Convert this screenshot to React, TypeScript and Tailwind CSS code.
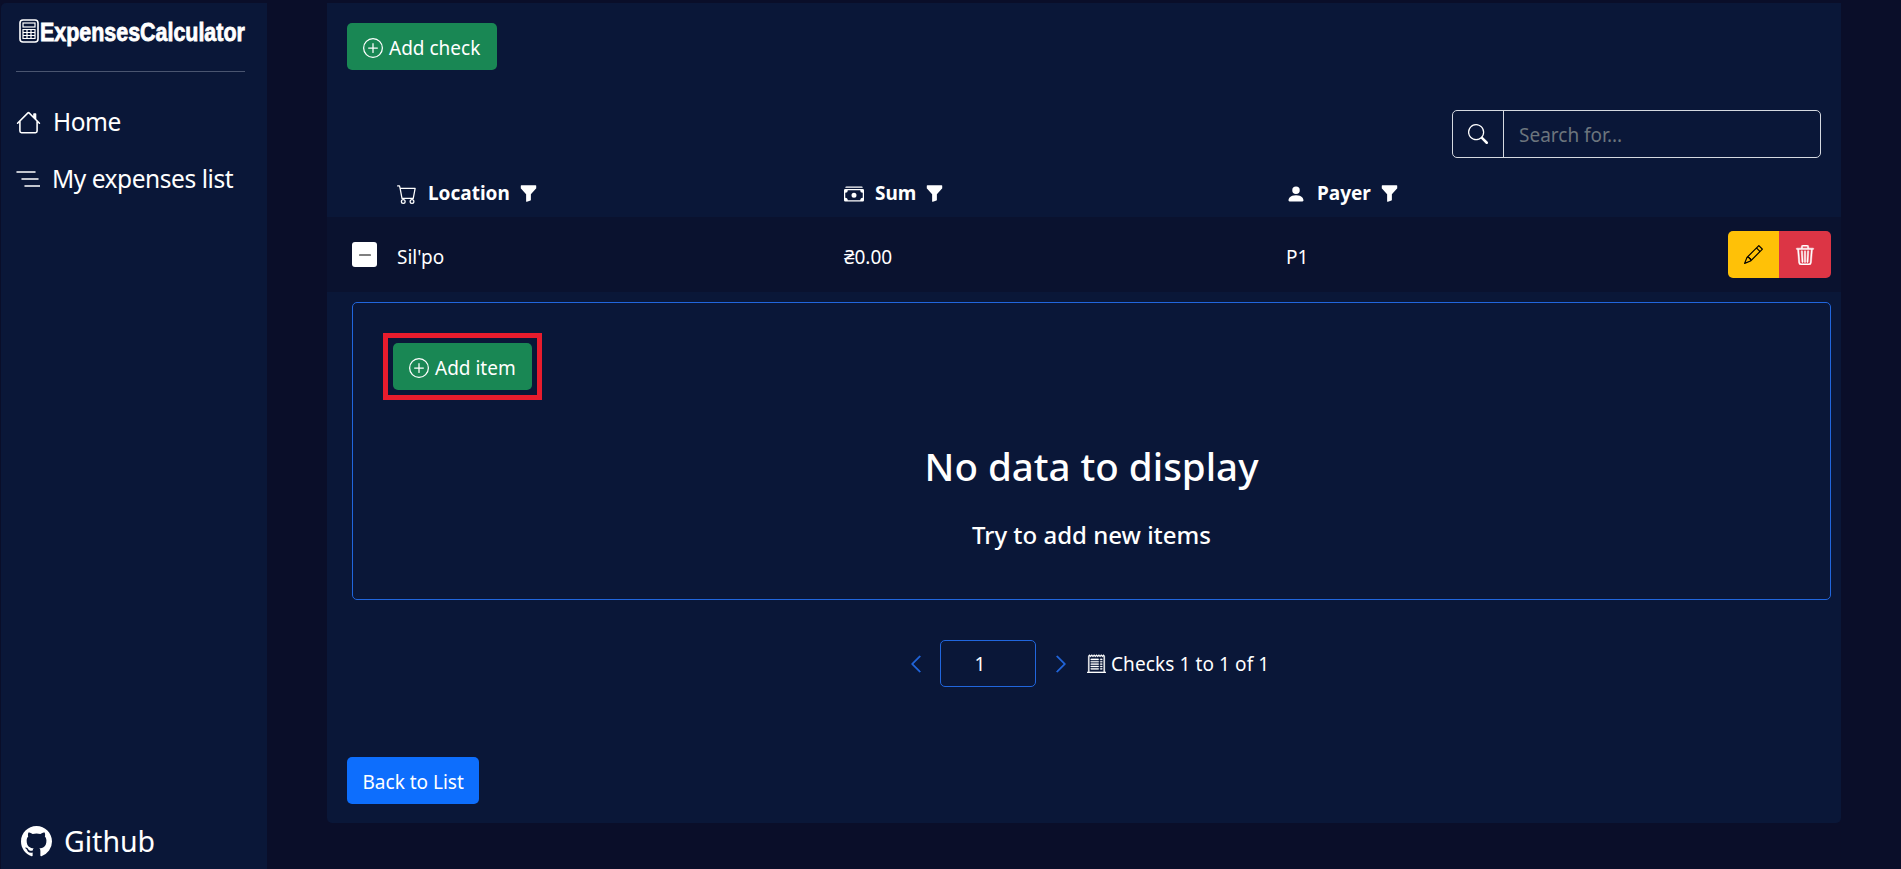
import { BsCart, BsCashStack, BsChevronLeft, BsChevronRight, BsDashLg, BsFunnelFill, BsGithub, BsHouse, BsPencil, BsPersonFill, BsPlusCircle, BsReceiptCutoff, BsSearch, BsTrash3 } from "react-icons/bs";

function ListIcon() {
  return (
    <svg viewBox="0 0 24 16" className="h-[16px] w-[24px]" fill="none" stroke="white" strokeWidth="1.5" strokeLinecap="round">
      <path d="M1 1h18M6 8h16M9 15h15" />
    </svg>
  );
}

function CalculatorIcon() {
  return (
    <svg viewBox="0 0 20 24" className="ml-[3px] h-[24px] w-[20px] shrink-0" fill="none" stroke="white">
      <rect x="1" y="1" width="18" height="22" rx="3" strokeWidth="1.6" />
      <rect x="4" y="4" width="12" height="4" strokeWidth="1.2" />
      <path d="M4 10.5h12v9H4zM4 13.5h12M4 16.5h12M8 10.5v9M12 10.5v9" strokeWidth="1.2" />
    </svg>
  );
}

function ColumnTitle({ icon, label, className }: { icon: React.ReactNode; label: string; className: string }) {
  return (
    <div className={`flex items-center font-bold ${className}`}>
      {icon}
      <span className="ml-[11px]">{label}</span>
      <BsFunnelFill className="ml-[9px] h-[19px] w-[19px]" />
    </div>
  );
}

function GreenButton({ label, className }: { label: string; className: string }) {
  return (
    <button className={`flex h-[47px] items-center gap-[6px] rounded-[5px] bg-[#198754] pt-[3px] pl-[16px] text-white ${className}`}>
      <BsPlusCircle className="h-[20px] w-[20px]" />
      {label}
    </button>
  );
}

export default function App() {
  return (
    <div className="flex h-[869px] w-[1901px] overflow-hidden bg-[#0a0e29] pt-[3px] text-[19px] text-white [font-family:'Noto_Sans',sans-serif]">
      <aside className="ml-[1px] flex w-[266px] flex-col rounded-tl-[5px] bg-[#0a1738] pb-[6px] pl-[15px] pr-[22px]">
        <div className="flex h-[69px] items-start border-b border-[#4a5570] pt-[16px]">
          <CalculatorIcon />
          <span className="ml-[1px] origin-left scale-x-[0.857] text-[25px] leading-[27px] font-bold whitespace-nowrap [-webkit-text-stroke:0.8px_white] [font-family:'Liberation_Sans',sans-serif]">
            ExpensesCalculator
          </span>
        </div>
        <nav className="mt-[30px] flex flex-col gap-[17px] text-[24.5px] leading-[40px] tracking-[-0.45px]">
          <a className="flex items-center gap-[12px]">
            <BsHouse className="h-[25px] w-[25px]" />
            Home
          </a>
          <a className="flex items-center gap-[12px]">
            <ListIcon />
            My expenses list
          </a>
        </nav>
        <a className="mt-auto ml-[5px] flex items-center gap-[12px] text-[28.5px]">
          <BsGithub className="h-[31px] w-[31px]" />
          Github
        </a>
      </aside>

      <main className="pl-[60px]">
        <div className="flex h-[820px] w-[1514px] flex-col rounded-b-[5px] bg-[#0a1738]">
          <div className="pt-[20px] pl-[20px]">
            <GreenButton label="Add check" className="pr-[17px]" />
          </div>

          <div className="mt-[40px] flex justify-end pr-[20px]">
            <div className="flex h-[48px] w-[369px] rounded-[5px] border border-[#d5d9e0]">
              <div className="flex w-[51px] items-center justify-center border-r border-[#d5d9e0]">
                <BsSearch className="h-[20px] w-[20px]" />
              </div>
              <input placeholder="Search for..." className="min-w-0 flex-1 bg-transparent px-[15px] pt-[2px] outline-none placeholder:text-[#6c757d]" />
            </div>
          </div>

          <div className="flex h-[59px] items-center pt-[12px] pl-[70px]">
            <ColumnTitle className="w-[447px]" icon={<BsCart className="h-[20px] w-[20px]" />} label="Location" />
            <ColumnTitle className="w-[442px]" icon={<BsCashStack className="h-[20px] w-[20px]" />} label="Sum" />
            <ColumnTitle className="" icon={<BsPersonFill className="h-[20px] w-[20px]" />} label="Payer" />
          </div>

          <div className="flex h-[75px] items-center bg-[#0a122f] pr-[10px] pl-[25px]">
            <div className="flex h-[25px] w-[25px] items-center justify-center rounded-[3px] bg-white text-black">
              <BsDashLg className="h-[16px] w-[16px]" />
            </div>
            <span className="ml-[20px] w-[447px] pt-[5px]">Sil'po</span>
            <span className="w-[442px] pt-[5px]">₴0.00</span>
            <span className="pt-[5px]">P1</span>
            <div className="ml-auto flex h-[47px] overflow-hidden rounded-[5px]">
              <div className="flex w-[51px] items-center justify-center bg-[#ffc107] text-black">
                <BsPencil className="h-[19px] w-[19px]" />
              </div>
              <div className="flex w-[52px] items-center justify-center bg-[#dc3545]">
                <BsTrash3 className="h-[20px] w-[20px]" stroke="currentColor" strokeWidth="0.4" />
              </div>
            </div>
          </div>

          <div className="mt-[10px] mr-[10px] ml-[25px] h-[298px] rounded-[5px] border border-[#2166dd] pt-[30px] pl-[30px]">
            <div className="w-fit border-[5px] border-[#e81c2d] p-[5px]">
              <GreenButton label="Add item" className="pr-[16px]" />
            </div>
            <div className="mt-[42px] pr-[30px] text-center">
              <h2 className="text-[38.5px] leading-[48px] font-medium">No data to display</h2>
              <p className="mt-[29px] text-[24px] leading-[32px] font-medium">Try to add new items</p>
            </div>
          </div>

          <div className="mt-[40px] flex h-[47px] items-center pl-[579px]">
            <BsChevronLeft className="h-[20px] w-[20px] text-[#2166dd]" stroke="currentColor" strokeWidth="0.5" />
            <div className="ml-[14px] flex h-[47px] w-[96px] items-center justify-center rounded-[5px] border border-[#2166dd] pt-[2px] pr-[16px]">1</div>
            <BsChevronRight className="ml-[15px] h-[20px] w-[20px] text-[#2166dd]" stroke="currentColor" strokeWidth="0.5" />
            <BsReceiptCutoff className="ml-[16px] h-[19px] w-[19px]" stroke="currentColor" strokeWidth="0.2" />
            <span className="ml-[5px] pt-[2px] tracking-[0.1px]">Checks 1 to 1 of 1</span>
          </div>

          <div className="mt-[70px] pl-[20px]">
            <button className="h-[47px] rounded-[5px] bg-[#0d6efd] px-[15.5px] pt-[3px] text-white">Back to List</button>
          </div>
        </div>
      </main>
    </div>
  );
}
